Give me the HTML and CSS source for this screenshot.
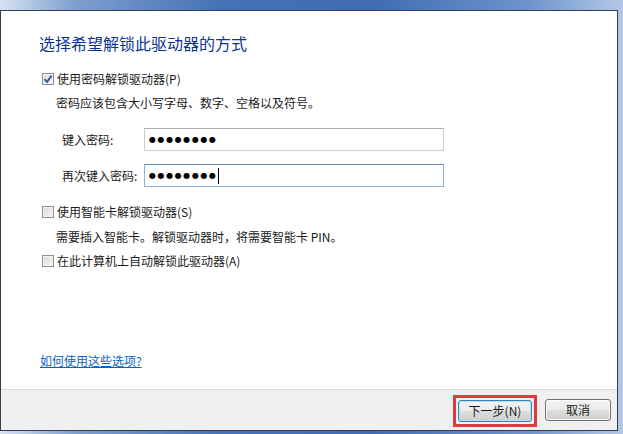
FILE: index.html
```html
<!DOCTYPE html>
<html lang="zh-CN">
<head>
  <meta charset="UTF-8">
  <meta name="viewport" content="width=device-width, initial-scale=1.0">
  <title>BitLocker 驱动器加密</title>
  <link rel="stylesheet" href="styles.css">
</head>
<body>
  <div class="glass-top"></div>
  <div class="window">
    <div class="content">
      <h1 class="instruction">选择希望解锁此驱动器的方式</h1>

      <label class="check-row first">
        <span class="checkbox checked">
          <svg width="10" height="10" viewBox="0 0 10 10"><path d="M1.5 5.2 L4 8 L8.6 1.6" fill="none" stroke="#3d5a98" stroke-width="2"/></svg>
        </span>
        使用密码解锁驱动器(P)
      </label>
      <p class="note">密码应该包含大小写字母、数字、空格以及符号。</p>

      <div class="fields">
        <div class="field">
          <span class="field-label">键入密码:</span>
          <div class="textbox">●●●●●●●●</div>
        </div>
        <div class="field">
          <span class="field-label">再次键入密码:</span>
          <div class="textbox focused">●●●●●●●●<span class="caret"></span></div>
        </div>
      </div>

      <label class="check-row second">
        <span class="checkbox"></span>
        使用智能卡解锁驱动器(S)
      </label>
      <p class="note tight">需要插入智能卡。解锁驱动器时，将需要智能卡 PIN。</p>

      <label class="check-row third">
        <span class="checkbox"></span>
        在此计算机上自动解锁此驱动器(A)
      </label>

      <a class="help-link" href="#">如何使用这些选项?</a>
    </div>

    <div class="footer">
      <span class="highlight">
        <button class="btn default" type="button">下一步(N)</button>
      </span>
      <button class="btn cancel" type="button">取消</button>
    </div>
  </div>
  <div class="glass-bottom"></div>
</body>
</html>
```

FILE: styles.css
```css
body {
  margin: 0;
  width: 623px;
  height: 434px;
  overflow: hidden;
  font-family: "Noto Sans CJK SC", "Microsoft YaHei", sans-serif;
  font-size: 12px;
  color: #1a1a1a;
  background: linear-gradient(90deg, #d6e2f1 0%, #7f9fcf 12%, #4672b6 35%, #3f6cb3 60%, #6f94cc 85%, #b4c8e6 100%);
}
.glass-top {
  height: 10px;
}
.window {
  width: 616px;
  border: 1px solid #2e3f57;
  background: #fff;
}
.content {
  height: 357px;
  padding: 21px 0 0 38px;
  display: flex;
  flex-direction: column;
  align-items: flex-start;
}
.instruction {
  margin: 0;
  font-size: 16px;
  line-height: 22px;
  font-weight: normal;
  color: #0c3593;
}
.check-row {
  display: flex;
  align-items: center;
  height: 20px;
  line-height: 20px;
}
.check-row.first {
  margin-top: 15px;
}
.check-row.second {
  margin-top: 15px;
}
.check-row.third {
  margin-top: 4px;
}
.checkbox {
  width: 10px;
  height: 10px;
  margin: 0 3px 0 3px;
  border: 1px solid #8e8f8f;
  background: linear-gradient(135deg, #d8d8d8, #f6f6f6);
  box-shadow: inset 0 0 0 1px #f4f4f4;
  display: flex;
  align-items: center;
  justify-content: center;
}
.checkbox svg {
  display: block;
}
.note {
  margin: 4px 0 0 17px;
  line-height: 20px;
}
.note.tight {
  margin-top: 5px;
}
.fields {
  margin: 15px 0 0 23px;
  display: flex;
  flex-direction: column;
  gap: 13px;
}
.field {
  display: flex;
  align-items: center;
}
.field-label {
  width: 82px;
}
.textbox {
  width: 294px;
  height: 21px;
  padding-left: 4px;
  border: 1px solid #c9ccd1;
  border-top-color: #abadb3;
  font-family: "DejaVu Sans", sans-serif;
  font-size: 8px;
  letter-spacing: 1.6px;
  line-height: 21px;
  color: #000;
  display: flex;
  align-items: center;
}
.textbox.focused {
  border-color: #8fb3d8;
  border-top-color: #5e8fc4;
}
.caret {
  width: 1px;
  height: 16px;
  background: #000;
}
.help-link {
  margin-top: auto;
  margin-bottom: 18px;
  margin-left: 1px;
  line-height: 20px;
  color: #0a62c8;
  text-decoration: underline;
}
.footer {
  height: 40px;
  border-top: 1px solid #dcdcdc;
  background: #f0f0f0;
  display: flex;
  align-items: center;
  justify-content: flex-end;
  gap: 8px;
  padding-right: 6px;
}
.highlight {
  display: flex;
  padding: 2px;
  border: 3px solid #e2383f;
  margin-top: 1px;
}
.btn {
  width: 74px;
  height: 22px;
  padding: 0;
  border: 1px solid #707070;
  border-radius: 3px;
  background: linear-gradient(#f3f3f3 0%, #ebebeb 48%, #dddddd 52%, #cfcfcf 100%);
  box-shadow: inset 0 0 0 1px #fbfbfb;
  font-family: "Noto Sans CJK SC", "Microsoft YaHei", sans-serif;
  font-size: 12px;
  line-height: 20px;
  color: #1a1a1a;
}
.btn.cancel {
  width: 66px;
}
.btn.default {
  border-color: #3c7fb1;
  box-shadow: inset 0 0 0 1px #a8e4f6;
}
.glass-bottom {
  height: 10px;
}
```
